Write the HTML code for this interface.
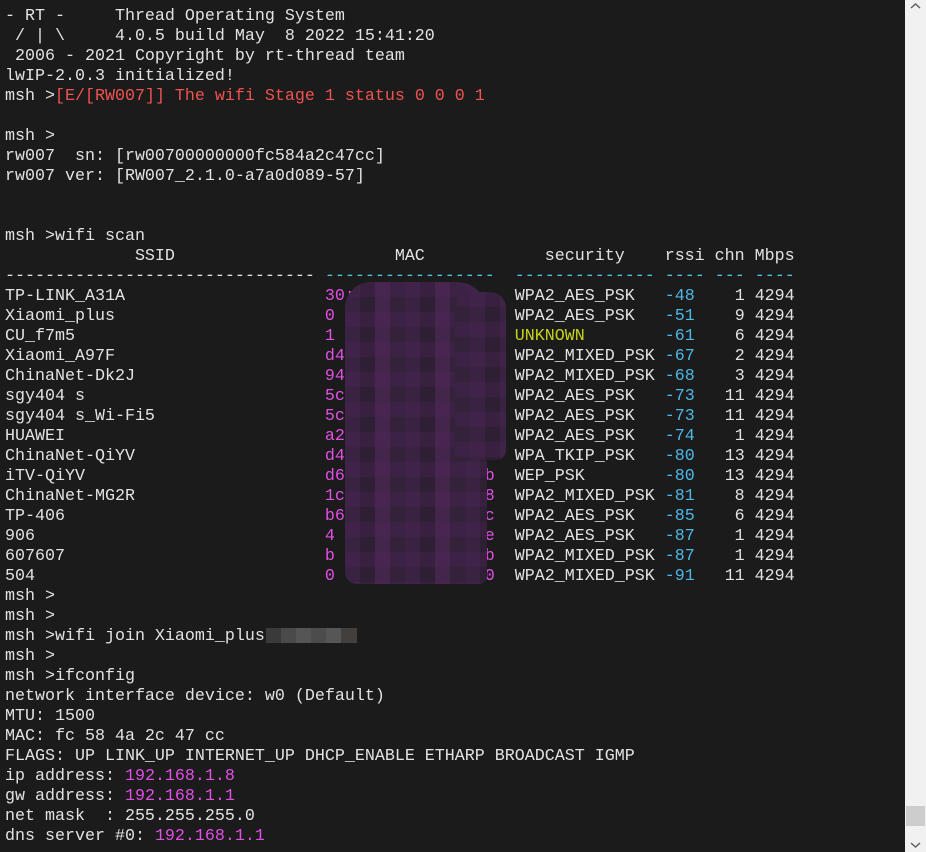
<!DOCTYPE html>
<html><head><meta charset="utf-8"><style>
html,body{margin:0;padding:0;background:#1b1b1b;width:926px;height:852px;overflow:hidden;}
pre{position:absolute;left:5px;top:7px;margin:0;font-family:"Liberation Mono",monospace;font-size:16.67px;line-height:20px;color:#e2e2e2;}
.r{color:#ef5350}.m{color:#e44ee8}.c{color:#4cb8e8}.y{color:#c8d21a}.d{color:#4cc8e0}
.sb{position:absolute;left:905px;top:0;width:21px;height:852px;background:#f1f1f1;}
.blur{position:absolute;left:345px;top:282px;width:142px;height:302px;border-radius:26px 30px 8px 12px;
background:
repeating-linear-gradient(180deg,rgba(80,36,90,.3) 0 15px,rgba(0,0,0,0) 15px 30px),
repeating-linear-gradient(90deg,#3a2342 0 15px,#2f1f34 15px 30px,#44264c 30px 45px,#34213a 45px 60px);}
.blur2{position:absolute;left:455px;top:292px;width:51px;height:168px;border-radius:14px 16px 10px 6px;
background:
repeating-linear-gradient(180deg,rgba(80,36,90,.3) 0 15px,rgba(0,0,0,0) 15px 30px),
repeating-linear-gradient(90deg,#34213a 0 15px,#3a2342 15px 30px,#2f1f34 30px 45px,#3a2342 45px 60px);}
.pw{position:absolute;left:266px;top:628px;width:91px;height:15px;background:linear-gradient(90deg,#3a3a3a 0 15px,#4a4a4a 15px 30px,#555 30px 45px,#4c4c4c 45px 60px,#565656 60px 75px,#433f3c 75px);}
</style></head><body>
<pre>- RT -     Thread Operating System
 / | \     4.0.5 build May  8 2022 15:41:20
 2006 - 2021 Copyright by rt-thread team
lwIP-2.0.3 initialized!
msh &gt;<span class="r">[E/[RW007]] The wifi Stage 1 status 0 0 0 1</span>

msh &gt;
rw007  sn: [rw00700000000fc584a2c47cc]
rw007 ver: [RW007_2.1.0-a7a0d089-57]


msh &gt;wifi scan
             SSID                      MAC            security    rssi chn Mbps
------------------------------- <span class="d">-----------------</span>  <span class="d">--------------</span> <span class="d">----</span> <span class="d">---</span> <span class="d">----</span>
TP-LINK_A31A                    <span class="m">30:f</span>               WPA2_AES_PSK   <span class="c">-48</span>    1 4294
Xiaomi_plus                     <span class="m">0</span>                  WPA2_AES_PSK   <span class="c">-51</span>    9 4294
CU_f7m5                         <span class="m">1</span>                  <span class="y">UNKNOWN</span>        <span class="c">-61</span>    6 4294
Xiaomi_A97F                     <span class="m">d4</span>                 WPA2_MIXED_PSK <span class="c">-67</span>    2 4294
ChinaNet-Dk2J                   <span class="m">94</span>                 WPA2_MIXED_PSK <span class="c">-68</span>    3 4294
sgy404 s                        <span class="m">5c:</span>                WPA2_AES_PSK   <span class="c">-73</span>   11 4294
sgy404 s_Wi-Fi5                 <span class="m">5c:</span>                WPA2_AES_PSK   <span class="c">-73</span>   11 4294
HUAWEI                          <span class="m">a2:</span>                WPA2_AES_PSK   <span class="c">-74</span>    1 4294
ChinaNet-QiYV                   <span class="m">d4</span>                 WPA_TKIP_PSK   <span class="c">-80</span>   13 4294
iTV-QiYV                        <span class="m">d6              b</span>  WEP_PSK        <span class="c">-80</span>   13 4294
ChinaNet-MG2R                   <span class="m">1c              8</span>  WPA2_MIXED_PSK <span class="c">-81</span>    8 4294
TP-406                          <span class="m">b6              c</span>  WPA2_AES_PSK   <span class="c">-85</span>    6 4294
906                             <span class="m">4               e</span>  WPA2_AES_PSK   <span class="c">-87</span>    1 4294
607607                          <span class="m">b               b</span>  WPA2_MIXED_PSK <span class="c">-87</span>    1 4294
504                             <span class="m">0               0</span>  WPA2_MIXED_PSK <span class="c">-91</span>   11 4294
msh &gt;
msh &gt;
msh &gt;wifi join Xiaomi_plus
msh &gt;
msh &gt;ifconfig
network interface device: w0 (Default)
MTU: 1500
MAC: fc 58 4a 2c 47 cc
FLAGS: UP LINK_UP INTERNET_UP DHCP_ENABLE ETHARP BROADCAST IGMP
ip address: <span class="m">192.168.1.8</span>
gw address: <span class="m">192.168.1.1</span>
net mask  : 255.255.255.0
dns server #0: <span class="m">192.168.1.1</span></pre>
<div class="blur"></div>
<div class="blur2"></div>
<div class="pw"></div>
<div class="sb">
<svg width="21" height="852" style="position:absolute;left:0;top:0">
<path d="M6 8 L10.5 4 L15 8" stroke="#606060" stroke-width="1.5" fill="none"/>
<rect x="1" y="806" width="19" height="20" fill="#cdcdcd"/>
<path d="M6 843 L10.5 847 L15 843" stroke="#606060" stroke-width="1.5" fill="none"/>
</svg></div>
</body></html>
